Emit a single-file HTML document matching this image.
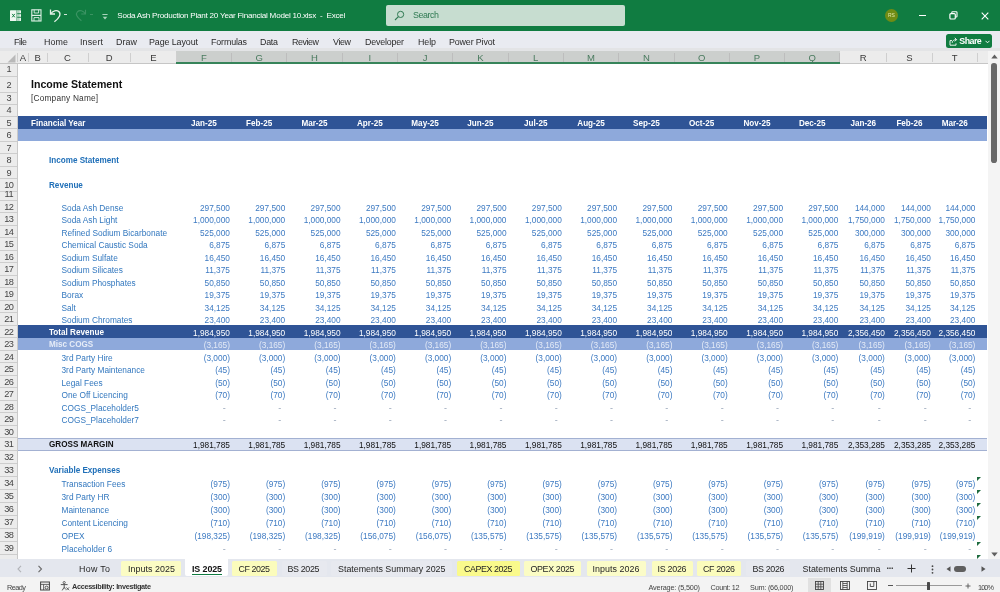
<!DOCTYPE html><html><head><meta charset="utf-8"><title>Soda Ash Production Plant 20 Year Financial Model 10.xlsx - Excel</title><style>
html,body{margin:0;padding:0;}
body{width:1000px;height:592px;overflow:hidden;position:relative;background:#fff;font-family:"Liberation Sans",sans-serif;-webkit-font-smoothing:antialiased;}
.a{position:absolute;white-space:nowrap;line-height:1;}
.t{position:absolute;white-space:nowrap;line-height:1;}
#titlebar{left:0;top:0;width:1000px;height:31px;background:#107c41;}
#ribbon{left:0;top:31px;width:1000px;height:17.3px;background:#e9ebf1;}
#strip{left:0;top:48.3px;width:1000px;height:2.8px;background:#e3e4e6;}
#colhdr{left:0;top:51px;width:1000px;height:12.75px;background:#ececec;}
#rowhdr{left:0;top:63.75px;width:17.5px;height:495.5px;background:#ececec;border-right:1px solid #c9c9c9;box-sizing:border-box;}
#tabbar{left:0;top:559px;width:1000px;height:18px;background:#e4e7ee;}
#status{left:0;top:577px;width:1000px;height:15px;background:#f3f3f3;}
.rn{font-size:9.2px;color:#444;width:17.6px;text-align:center;left:0.3px;letter-spacing:-.5px;text-indent:-.5px;}
.cl{font-size:9.5px;color:#3a3a3a;text-align:center;}
.rib{font-size:8.9px;color:#2b2b2b;}
.lab{font-size:8.3px;color:#3378bf;}
.num{font-size:8.3px;color:#3d7ac2;text-align:right;}
.sec{font-size:8.15px;color:#1f6fb8;font-weight:bold;}
.band{left:17.5px;width:969.4px;}
.tab{font-size:8.9px;color:#262626;}
.tabbg{top:560.5px;height:15.5px;border-radius:1.5px;}
.st{font-size:7.3px;color:#444;}
</style></head><body><div id="root" style="position:absolute;left:0;top:0;width:1000px;height:592px;will-change:transform">
<div class="a" id="titlebar"></div>
<svg class="a" style="left:10px;top:10px" width="11.2" height="11.2" viewBox="0 0 11.2 11.2"><rect x="0" y="0.2" width="11" height="10.8" fill="#eef7f1" rx=".6"/><path d="M6.9 .2v10.8" stroke="#107c41" stroke-width=".7"/><path d="M7.2 3.7h3.8M7.2 7.3h3.8" stroke="#107c41" stroke-width=".9"/><path d="M8.9 .2v10.8" stroke="#107c41" stroke-width=".45"/><path d="M2.2 3.9l2.6 3.4M4.8 3.9L2.2 7.3" stroke="#107c41" stroke-width="1"/></svg>
<svg class="a" style="left:30.9px;top:9.2px" width="11" height="13" viewBox="0 0 11 13"><rect x=".8" y=".8" width="9.2" height="11.2" fill="none" stroke="#dff0e6" stroke-width="1.1"/><path d="M.8 6.4h9.2" stroke="#dff0e6" stroke-width="1.2"/><path d="M3.2 .8v3.2h4.4V.8" fill="none" stroke="#dff0e6" stroke-width=".9"/><path d="M3 12V8.6h5V12" fill="none" stroke="#dff0e6" stroke-width=".9"/></svg>
<svg class="a" style="left:49px;top:7.8px" width="13" height="15" viewBox="0 0 13 15"><path d="M1.5 1.5v4.5h4.5" fill="none" stroke="#e6f2ea" stroke-width="1.3"/><path d="M1.8 5.8C3.5 2.6 7.8 1.6 10 3.8c2.3 2.4 0.4 6-4.6 10" fill="none" stroke="#e6f2ea" stroke-width="1.3"/></svg>
<div class="a" style="left:64.3px;top:13.9px;width:3.2px;height:1.3px;background:#cfe5d8"></div>
<svg class="a" style="left:74px;top:8.2px;opacity:.2" width="13" height="14" viewBox="0 0 13 14"><path d="M11.5 1.8v4.2H7.3" fill="none" stroke="#e6f2ea" stroke-width="1.1"/><path d="M11.2 5.8C9.5 2.6 5.5 1.6 3.4 3.8c-2.2 2.3-.6 5.5 4 9" fill="none" stroke="#e6f2ea" stroke-width="1.1"/></svg>
<div class="a" style="left:90.3px;top:13.9px;width:3.2px;height:1.3px;background:#d5e8dc;opacity:.22"></div>
<svg class="a" style="left:100.5px;top:12.5px" width="8" height="8" viewBox="0 0 8 8"><path d="M1.4 1.5h5.2" stroke="#a9d3bb" stroke-width="1"/><path d="M1.7 3.8h4.6L4 6.4z" fill="#a9d3bb"/></svg>
<div class="t" id="ttl" style="letter-spacing:-0.240px;left:117.3px;top:12.2px;font-size:8.1px;color:#fff;">Soda Ash Production Plant 20 Year Financial Model 10.xlsx&nbsp; -&nbsp; Excel</div>
<div class="a" style="left:385.5px;top:5px;width:239.5px;height:20.5px;background:#c7ddd0;border-radius:2px"></div>
<svg class="a" style="left:393.6px;top:9.8px" width="11" height="11" viewBox="0 0 11 11"><circle cx="6.6" cy="4.4" r="3.1" fill="none" stroke="#2f7a52" stroke-width="1"/><path d="M4.4 6.6L1 10" stroke="#2f7a52" stroke-width="1.1"/></svg>
<div class="t" id="srch" style="letter-spacing:-0.425px;left:413px;top:11px;font-size:8.9px;color:#2f7a52;">Search</div>
<div class="a" style="left:884.7px;top:8.7px;width:13.6px;height:13.6px;border-radius:50%;background:#6f8c14;"></div>
<div class="t" style="left:888px;top:13.2px;font-size:5px;color:#e3e8a8;">RS</div>
<div class="a" style="left:918.5px;top:15px;width:7px;height:1px;background:#fff"></div>
<svg class="a" style="left:948.5px;top:11px" width="9" height="9" viewBox="0 0 9 9"><rect x="0.9" y="2.6" width="5.4" height="5.4" fill="none" stroke="#fff" stroke-width="1.2" rx="1"/><path d="M2.8 2.2V1.6a.8.8 0 0 1 .8-.8h3.6a.8.8 0 0 1 .8.8v3.6a.8.8 0 0 1-.8.8h-.6" fill="none" stroke="#fff" stroke-width="1.1"/></svg>
<svg class="a" style="left:980.5px;top:11.5px" width="8" height="8" viewBox="0 0 8 8"><path d="M.7.7l6.6 6.6M7.3.7L.7 7.3" stroke="#fff" stroke-width="1.1"/></svg>
<div class="a" id="ribbon"></div><div class="a" id="strip"></div>
<div class="t rib" style="letter-spacing:-0.438px;left:14px;top:38.1px;">File</div>
<div class="t rib" style="letter-spacing:0.104px;left:44px;top:38.1px;">Home</div>
<div class="t rib" style="letter-spacing:0.159px;left:80px;top:38.1px;">Insert</div>
<div class="t rib" style="letter-spacing:0.094px;left:116px;top:38.1px;">Draw</div>
<div class="t rib" style="letter-spacing:-0.084px;left:149px;top:38.1px;">Page Layout</div>
<div class="t rib" style="letter-spacing:-0.143px;left:211px;top:38.1px;">Formulas</div>
<div class="t rib" style="letter-spacing:-0.250px;left:260px;top:38.1px;">Data</div>
<div class="t rib" style="letter-spacing:-0.422px;left:292px;top:38.1px;">Review</div>
<div class="t rib" style="letter-spacing:-0.359px;left:333px;top:38.1px;">View</div>
<div class="t rib" style="letter-spacing:-0.184px;left:365px;top:38.1px;">Developer</div>
<div class="t rib" style="letter-spacing:-0.089px;left:418px;top:38.1px;">Help</div>
<div class="t rib" style="letter-spacing:-0.136px;left:449px;top:38.1px;">Power Pivot</div>
<div class="a" style="left:946px;top:33.7px;width:46.3px;height:14.8px;background:#107c41;border-radius:2.5px"></div>
<svg class="a" style="left:949.3px;top:36.7px" width="9" height="9" viewBox="0 0 9 9"><path d="M3 3.6H1v4.6h6V6.4" fill="none" stroke="#fff" stroke-width=".9"/><path d="M3.2 5.8C3.4 3.6 5 2.6 7.4 2.6M5.8 .8l1.8 1.8-1.8 1.8" fill="none" stroke="#fff" stroke-width=".9"/></svg>
<div class="t" style="letter-spacing:-0.543px;left:959.3px;top:36.9px;font-size:8.9px;font-weight:bold;color:#fff;">Share</div>
<svg class="a" style="left:985px;top:40px" width="5" height="4" viewBox="0 0 5 4"><path d="M.5.8l2 2 2-2" fill="none" stroke="#fff" stroke-width=".9"/></svg>
<div class="a" id="colhdr"></div>
<div class="a" style="left:176.25px;top:51px;width:663.75px;height:12.75px;background:#cccfcd;border-bottom:2px solid #37845a;box-sizing:border-box"></div>
<div class="a" style="left:0;top:63.25px;width:176.25px;height:.6px;background:#c6c6c6"></div>
<div class="a" style="left:840px;top:63.25px;width:160px;height:.6px;background:#c6c6c6"></div>
<div class="a cl" style="left:17.5px;width:11.00px;top:53.2px;color:#3a3a3a">A</div>
<div class="a" style="left:28.00px;top:53px;width:.8px;height:9px;background:#cfcfcf"></div>
<div class="a cl" style="left:28.5px;width:18.50px;top:53.2px;color:#3a3a3a">B</div>
<div class="a" style="left:46.50px;top:53px;width:.8px;height:9px;background:#cfcfcf"></div>
<div class="a cl" style="left:47px;width:41.00px;top:53.2px;color:#3a3a3a">C</div>
<div class="a" style="left:87.50px;top:53px;width:.8px;height:9px;background:#cfcfcf"></div>
<div class="a cl" style="left:88px;width:42.50px;top:53.2px;color:#3a3a3a">D</div>
<div class="a" style="left:130.00px;top:53px;width:.8px;height:9px;background:#cfcfcf"></div>
<div class="a cl" style="left:130.5px;width:45.75px;top:53.2px;color:#3a3a3a">E</div>
<div class="a" style="left:175.75px;top:53px;width:.8px;height:9px;background:#cfcfcf"></div>
<div class="a cl" style="left:176.25px;width:55.31px;top:53.2px;color:#4a7b5f">F</div>
<div class="a" style="left:231.06px;top:53px;width:.8px;height:9px;background:#bdbdbd"></div>
<div class="a cl" style="left:231.56px;width:55.31px;top:53.2px;color:#4a7b5f">G</div>
<div class="a" style="left:286.37px;top:53px;width:.8px;height:9px;background:#bdbdbd"></div>
<div class="a cl" style="left:286.87px;width:55.31px;top:53.2px;color:#4a7b5f">H</div>
<div class="a" style="left:341.68px;top:53px;width:.8px;height:9px;background:#bdbdbd"></div>
<div class="a cl" style="left:342.18px;width:55.31px;top:53.2px;color:#4a7b5f">I</div>
<div class="a" style="left:396.99px;top:53px;width:.8px;height:9px;background:#bdbdbd"></div>
<div class="a cl" style="left:397.49px;width:55.31px;top:53.2px;color:#4a7b5f">J</div>
<div class="a" style="left:452.30px;top:53px;width:.8px;height:9px;background:#bdbdbd"></div>
<div class="a cl" style="left:452.8px;width:55.31px;top:53.2px;color:#4a7b5f">K</div>
<div class="a" style="left:507.61px;top:53px;width:.8px;height:9px;background:#bdbdbd"></div>
<div class="a cl" style="left:508.11px;width:55.31px;top:53.2px;color:#4a7b5f">L</div>
<div class="a" style="left:562.92px;top:53px;width:.8px;height:9px;background:#bdbdbd"></div>
<div class="a cl" style="left:563.4200000000001px;width:55.31px;top:53.2px;color:#4a7b5f">M</div>
<div class="a" style="left:618.23px;top:53px;width:.8px;height:9px;background:#bdbdbd"></div>
<div class="a cl" style="left:618.73px;width:55.31px;top:53.2px;color:#4a7b5f">N</div>
<div class="a" style="left:673.54px;top:53px;width:.8px;height:9px;background:#bdbdbd"></div>
<div class="a cl" style="left:674.04px;width:55.31px;top:53.2px;color:#4a7b5f">O</div>
<div class="a" style="left:728.85px;top:53px;width:.8px;height:9px;background:#bdbdbd"></div>
<div class="a cl" style="left:729.3499999999999px;width:55.31px;top:53.2px;color:#4a7b5f">P</div>
<div class="a" style="left:784.16px;top:53px;width:.8px;height:9px;background:#bdbdbd"></div>
<div class="a cl" style="left:784.6599999999999px;width:55.31px;top:53.2px;color:#4a7b5f">Q</div>
<div class="a" style="left:839.47px;top:53px;width:.8px;height:9px;background:#bdbdbd"></div>
<div class="a cl" style="left:840px;width:46.50px;top:53.2px;color:#3a3a3a">R</div>
<div class="a" style="left:886.00px;top:53px;width:.8px;height:9px;background:#cfcfcf"></div>
<div class="a cl" style="left:886.5px;width:46.00px;top:53.2px;color:#3a3a3a">S</div>
<div class="a" style="left:932.00px;top:53px;width:.8px;height:9px;background:#cfcfcf"></div>
<div class="a cl" style="left:932.5px;width:44.50px;top:53.2px;color:#3a3a3a">T</div>
<div class="a" style="left:976.50px;top:53px;width:.8px;height:9px;background:#cfcfcf"></div>
<svg class="a" style="left:7px;top:54px" width="9" height="9" viewBox="0 0 9 9"><path d="M8.5 .5v8h-8z" fill="#b9b9b9"/></svg>
<div class="a" style="left:17px;top:53px;width:.8px;height:9px;background:#cfcfcf"></div>
<div class="a" id="rowhdr"></div>
<div class="a rn" style="top:65.40px;">1</div>
<div class="a" style="left:0;top:75.85px;width:17px;height:.7px;background:#cdcdcd"></div>
<div class="a rn" style="top:80.65px;">2</div>
<div class="a" style="left:0;top:91.85px;width:17px;height:.7px;background:#cdcdcd"></div>
<div class="a rn" style="top:94.05px;">3</div>
<div class="a" style="left:0;top:103.85px;width:17px;height:.7px;background:#cdcdcd"></div>
<div class="a rn" style="top:106.12px;">4</div>
<div class="a" style="left:0;top:115.60px;width:17px;height:.7px;background:#cdcdcd"></div>
<div class="a rn" style="top:118.65px;">5</div>
<div class="a" style="left:0;top:128.10px;width:17px;height:.7px;background:#cdcdcd"></div>
<div class="a rn" style="top:131.15px;">6</div>
<div class="a" style="left:0;top:140.60px;width:17px;height:.7px;background:#cdcdcd"></div>
<div class="a rn" style="top:143.65px;">7</div>
<div class="a" style="left:0;top:153.10px;width:17px;height:.7px;background:#cdcdcd"></div>
<div class="a rn" style="top:156.15px;">8</div>
<div class="a" style="left:0;top:165.60px;width:17px;height:.7px;background:#cdcdcd"></div>
<div class="a rn" style="top:168.65px;">9</div>
<div class="a" style="left:0;top:178.10px;width:17px;height:.7px;background:#cdcdcd"></div>
<div class="a rn" style="top:181.15px;">10</div>
<div class="a" style="left:0;top:190.60px;width:17px;height:.7px;background:#cdcdcd"></div>
<div class="a rn" style="top:190.00px;">11</div>
<div class="a" style="left:0;top:199.60px;width:17px;height:.7px;background:#cdcdcd"></div>
<div class="a rn" style="top:202.65px;">12</div>
<div class="a" style="left:0;top:212.10px;width:17px;height:.7px;background:#cdcdcd"></div>
<div class="a rn" style="top:215.15px;">13</div>
<div class="a" style="left:0;top:224.60px;width:17px;height:.7px;background:#cdcdcd"></div>
<div class="a rn" style="top:227.65px;">14</div>
<div class="a" style="left:0;top:237.10px;width:17px;height:.7px;background:#cdcdcd"></div>
<div class="a rn" style="top:240.15px;">15</div>
<div class="a" style="left:0;top:249.60px;width:17px;height:.7px;background:#cdcdcd"></div>
<div class="a rn" style="top:252.65px;">16</div>
<div class="a" style="left:0;top:262.10px;width:17px;height:.7px;background:#cdcdcd"></div>
<div class="a rn" style="top:265.15px;">17</div>
<div class="a" style="left:0;top:274.60px;width:17px;height:.7px;background:#cdcdcd"></div>
<div class="a rn" style="top:277.65px;">18</div>
<div class="a" style="left:0;top:287.10px;width:17px;height:.7px;background:#cdcdcd"></div>
<div class="a rn" style="top:290.15px;">19</div>
<div class="a" style="left:0;top:299.60px;width:17px;height:.7px;background:#cdcdcd"></div>
<div class="a rn" style="top:302.65px;">20</div>
<div class="a" style="left:0;top:312.10px;width:17px;height:.7px;background:#cdcdcd"></div>
<div class="a rn" style="top:315.15px;">21</div>
<div class="a" style="left:0;top:324.60px;width:17px;height:.7px;background:#cdcdcd"></div>
<div class="a rn" style="top:327.65px;">22</div>
<div class="a" style="left:0;top:337.10px;width:17px;height:.7px;background:#cdcdcd"></div>
<div class="a rn" style="top:340.15px;">23</div>
<div class="a" style="left:0;top:349.60px;width:17px;height:.7px;background:#cdcdcd"></div>
<div class="a rn" style="top:352.65px;">24</div>
<div class="a" style="left:0;top:362.10px;width:17px;height:.7px;background:#cdcdcd"></div>
<div class="a rn" style="top:365.15px;">25</div>
<div class="a" style="left:0;top:374.60px;width:17px;height:.7px;background:#cdcdcd"></div>
<div class="a rn" style="top:377.65px;">26</div>
<div class="a" style="left:0;top:387.10px;width:17px;height:.7px;background:#cdcdcd"></div>
<div class="a rn" style="top:390.15px;">27</div>
<div class="a" style="left:0;top:399.60px;width:17px;height:.7px;background:#cdcdcd"></div>
<div class="a rn" style="top:402.65px;">28</div>
<div class="a" style="left:0;top:412.10px;width:17px;height:.7px;background:#cdcdcd"></div>
<div class="a rn" style="top:415.15px;">29</div>
<div class="a" style="left:0;top:424.60px;width:17px;height:.7px;background:#cdcdcd"></div>
<div class="a rn" style="top:427.65px;">30</div>
<div class="a" style="left:0;top:437.10px;width:17px;height:.7px;background:#cdcdcd"></div>
<div class="a rn" style="top:440.40px;">31</div>
<div class="a" style="left:0;top:450.10px;width:17px;height:.7px;background:#cdcdcd"></div>
<div class="a rn" style="top:453.40px;">32</div>
<div class="a" style="left:0;top:463.10px;width:17px;height:.7px;background:#cdcdcd"></div>
<div class="a rn" style="top:466.40px;">33</div>
<div class="a" style="left:0;top:476.10px;width:17px;height:.7px;background:#cdcdcd"></div>
<div class="a rn" style="top:479.40px;">34</div>
<div class="a" style="left:0;top:489.10px;width:17px;height:.7px;background:#cdcdcd"></div>
<div class="a rn" style="top:492.40px;">35</div>
<div class="a" style="left:0;top:502.10px;width:17px;height:.7px;background:#cdcdcd"></div>
<div class="a rn" style="top:505.40px;">36</div>
<div class="a" style="left:0;top:515.10px;width:17px;height:.7px;background:#cdcdcd"></div>
<div class="a rn" style="top:518.40px;">37</div>
<div class="a" style="left:0;top:528.10px;width:17px;height:.7px;background:#cdcdcd"></div>
<div class="a rn" style="top:531.40px;">38</div>
<div class="a" style="left:0;top:541.10px;width:17px;height:.7px;background:#cdcdcd"></div>
<div class="a rn" style="top:544.40px;">39</div>
<div class="a" style="left:0;top:554.10px;width:17px;height:.7px;background:#cdcdcd"></div>
<div class="a band" style="top:116px;height:12.5px;background:#2f5496;"></div>
<div class="a band" style="top:128.5px;height:12.5px;background:#8ea9db;"></div>
<div class="a band" style="top:325.0px;height:12.5px;background:#2f5496;"></div>
<div class="a band" style="top:337.5px;height:12.5px;background:#8ea9db;"></div>
<div class="a band" style="top:437.5px;height:13.0px;background:#dbe2f2;border-top:.8px solid #a3b1d2;border-bottom:.8px solid #a3b1d2;box-sizing:border-box;"></div>
<div class="t" id="h1" style="left:31px;top:78.85px;font-size:10.6px;font-weight:bold;color:#111;">Income Statement</div>
<div class="t lab" style="left:31px;top:95.60px;color:#333;margin-top:-1.2px;letter-spacing:.2px;">[Company Name]</div>
<div class="t sec" style="left:31px;top:119.60px;color:#fff;">Financial Year</div>
<div class="t sec" style="left:176.25px;width:55.31px;text-align:center;top:119.60px;color:#fff;">Jan-25</div>
<div class="t sec" style="left:231.56px;width:55.31px;text-align:center;top:119.60px;color:#fff;">Feb-25</div>
<div class="t sec" style="left:286.87px;width:55.31px;text-align:center;top:119.60px;color:#fff;">Mar-25</div>
<div class="t sec" style="left:342.18px;width:55.31px;text-align:center;top:119.60px;color:#fff;">Apr-25</div>
<div class="t sec" style="left:397.49px;width:55.31px;text-align:center;top:119.60px;color:#fff;">May-25</div>
<div class="t sec" style="left:452.8px;width:55.31px;text-align:center;top:119.60px;color:#fff;">Jun-25</div>
<div class="t sec" style="left:508.11px;width:55.31px;text-align:center;top:119.60px;color:#fff;">Jul-25</div>
<div class="t sec" style="left:563.4200000000001px;width:55.31px;text-align:center;top:119.60px;color:#fff;">Aug-25</div>
<div class="t sec" style="left:618.73px;width:55.31px;text-align:center;top:119.60px;color:#fff;">Sep-25</div>
<div class="t sec" style="left:674.04px;width:55.31px;text-align:center;top:119.60px;color:#fff;">Oct-25</div>
<div class="t sec" style="left:729.3499999999999px;width:55.31px;text-align:center;top:119.60px;color:#fff;">Nov-25</div>
<div class="t sec" style="left:784.6599999999999px;width:55.31px;text-align:center;top:119.60px;color:#fff;">Dec-25</div>
<div class="t sec" style="left:840px;width:46.50px;text-align:center;top:119.60px;color:#fff;">Jan-26</div>
<div class="t sec" style="left:886.5px;width:46.00px;text-align:center;top:119.60px;color:#fff;">Feb-26</div>
<div class="t sec" style="left:932.5px;width:44.50px;text-align:center;top:119.60px;color:#fff;">Mar-26</div>
<div class="t sec" style="left:49px;top:157.10px;">Income Statement</div>
<div class="t sec" style="left:49px;top:182.10px;">Revenue</div>
<div class="t lab" style="left:61.5px;top:203.60px;">Soda Ash Dense</div>
<div class="t num" style="left:176.25px;width:53.71px;top:203.60px;">297,500</div>
<div class="t num" style="left:231.56px;width:53.71px;top:203.60px;">297,500</div>
<div class="t num" style="left:286.87px;width:53.71px;top:203.60px;">297,500</div>
<div class="t num" style="left:342.18px;width:53.71px;top:203.60px;">297,500</div>
<div class="t num" style="left:397.49px;width:53.71px;top:203.60px;">297,500</div>
<div class="t num" style="left:452.8px;width:53.71px;top:203.60px;">297,500</div>
<div class="t num" style="left:508.11px;width:53.71px;top:203.60px;">297,500</div>
<div class="t num" style="left:563.4200000000001px;width:53.71px;top:203.60px;">297,500</div>
<div class="t num" style="left:618.73px;width:53.71px;top:203.60px;">297,500</div>
<div class="t num" style="left:674.04px;width:53.71px;top:203.60px;">297,500</div>
<div class="t num" style="left:729.3499999999999px;width:53.71px;top:203.60px;">297,500</div>
<div class="t num" style="left:784.6599999999999px;width:53.71px;top:203.60px;">297,500</div>
<div class="t num" style="left:840px;width:44.90px;top:203.60px;">144,000</div>
<div class="t num" style="left:886.5px;width:44.40px;top:203.60px;">144,000</div>
<div class="t num" style="left:932.5px;width:42.90px;top:203.60px;">144,000</div>
<div class="t lab" style="left:61.5px;top:216.10px;">Soda Ash Light</div>
<div class="t num" style="left:176.25px;width:53.71px;top:216.10px;">1,000,000</div>
<div class="t num" style="left:231.56px;width:53.71px;top:216.10px;">1,000,000</div>
<div class="t num" style="left:286.87px;width:53.71px;top:216.10px;">1,000,000</div>
<div class="t num" style="left:342.18px;width:53.71px;top:216.10px;">1,000,000</div>
<div class="t num" style="left:397.49px;width:53.71px;top:216.10px;">1,000,000</div>
<div class="t num" style="left:452.8px;width:53.71px;top:216.10px;">1,000,000</div>
<div class="t num" style="left:508.11px;width:53.71px;top:216.10px;">1,000,000</div>
<div class="t num" style="left:563.4200000000001px;width:53.71px;top:216.10px;">1,000,000</div>
<div class="t num" style="left:618.73px;width:53.71px;top:216.10px;">1,000,000</div>
<div class="t num" style="left:674.04px;width:53.71px;top:216.10px;">1,000,000</div>
<div class="t num" style="left:729.3499999999999px;width:53.71px;top:216.10px;">1,000,000</div>
<div class="t num" style="left:784.6599999999999px;width:53.71px;top:216.10px;">1,000,000</div>
<div class="t num" style="left:840px;width:44.90px;top:216.10px;">1,750,000</div>
<div class="t num" style="left:886.5px;width:44.40px;top:216.10px;">1,750,000</div>
<div class="t num" style="left:932.5px;width:42.90px;top:216.10px;">1,750,000</div>
<div class="t lab" style="left:61.5px;top:228.60px;">Refined Sodium Bicarbonate</div>
<div class="t num" style="left:176.25px;width:53.71px;top:228.60px;">525,000</div>
<div class="t num" style="left:231.56px;width:53.71px;top:228.60px;">525,000</div>
<div class="t num" style="left:286.87px;width:53.71px;top:228.60px;">525,000</div>
<div class="t num" style="left:342.18px;width:53.71px;top:228.60px;">525,000</div>
<div class="t num" style="left:397.49px;width:53.71px;top:228.60px;">525,000</div>
<div class="t num" style="left:452.8px;width:53.71px;top:228.60px;">525,000</div>
<div class="t num" style="left:508.11px;width:53.71px;top:228.60px;">525,000</div>
<div class="t num" style="left:563.4200000000001px;width:53.71px;top:228.60px;">525,000</div>
<div class="t num" style="left:618.73px;width:53.71px;top:228.60px;">525,000</div>
<div class="t num" style="left:674.04px;width:53.71px;top:228.60px;">525,000</div>
<div class="t num" style="left:729.3499999999999px;width:53.71px;top:228.60px;">525,000</div>
<div class="t num" style="left:784.6599999999999px;width:53.71px;top:228.60px;">525,000</div>
<div class="t num" style="left:840px;width:44.90px;top:228.60px;">300,000</div>
<div class="t num" style="left:886.5px;width:44.40px;top:228.60px;">300,000</div>
<div class="t num" style="left:932.5px;width:42.90px;top:228.60px;">300,000</div>
<div class="t lab" style="left:61.5px;top:241.10px;">Chemical Caustic Soda</div>
<div class="t num" style="left:176.25px;width:53.71px;top:241.10px;">6,875</div>
<div class="t num" style="left:231.56px;width:53.71px;top:241.10px;">6,875</div>
<div class="t num" style="left:286.87px;width:53.71px;top:241.10px;">6,875</div>
<div class="t num" style="left:342.18px;width:53.71px;top:241.10px;">6,875</div>
<div class="t num" style="left:397.49px;width:53.71px;top:241.10px;">6,875</div>
<div class="t num" style="left:452.8px;width:53.71px;top:241.10px;">6,875</div>
<div class="t num" style="left:508.11px;width:53.71px;top:241.10px;">6,875</div>
<div class="t num" style="left:563.4200000000001px;width:53.71px;top:241.10px;">6,875</div>
<div class="t num" style="left:618.73px;width:53.71px;top:241.10px;">6,875</div>
<div class="t num" style="left:674.04px;width:53.71px;top:241.10px;">6,875</div>
<div class="t num" style="left:729.3499999999999px;width:53.71px;top:241.10px;">6,875</div>
<div class="t num" style="left:784.6599999999999px;width:53.71px;top:241.10px;">6,875</div>
<div class="t num" style="left:840px;width:44.90px;top:241.10px;">6,875</div>
<div class="t num" style="left:886.5px;width:44.40px;top:241.10px;">6,875</div>
<div class="t num" style="left:932.5px;width:42.90px;top:241.10px;">6,875</div>
<div class="t lab" style="left:61.5px;top:253.60px;">Sodium Sulfate</div>
<div class="t num" style="left:176.25px;width:53.71px;top:253.60px;">16,450</div>
<div class="t num" style="left:231.56px;width:53.71px;top:253.60px;">16,450</div>
<div class="t num" style="left:286.87px;width:53.71px;top:253.60px;">16,450</div>
<div class="t num" style="left:342.18px;width:53.71px;top:253.60px;">16,450</div>
<div class="t num" style="left:397.49px;width:53.71px;top:253.60px;">16,450</div>
<div class="t num" style="left:452.8px;width:53.71px;top:253.60px;">16,450</div>
<div class="t num" style="left:508.11px;width:53.71px;top:253.60px;">16,450</div>
<div class="t num" style="left:563.4200000000001px;width:53.71px;top:253.60px;">16,450</div>
<div class="t num" style="left:618.73px;width:53.71px;top:253.60px;">16,450</div>
<div class="t num" style="left:674.04px;width:53.71px;top:253.60px;">16,450</div>
<div class="t num" style="left:729.3499999999999px;width:53.71px;top:253.60px;">16,450</div>
<div class="t num" style="left:784.6599999999999px;width:53.71px;top:253.60px;">16,450</div>
<div class="t num" style="left:840px;width:44.90px;top:253.60px;">16,450</div>
<div class="t num" style="left:886.5px;width:44.40px;top:253.60px;">16,450</div>
<div class="t num" style="left:932.5px;width:42.90px;top:253.60px;">16,450</div>
<div class="t lab" style="left:61.5px;top:266.10px;">Sodium Silicates</div>
<div class="t num" style="left:176.25px;width:53.71px;top:266.10px;">11,375</div>
<div class="t num" style="left:231.56px;width:53.71px;top:266.10px;">11,375</div>
<div class="t num" style="left:286.87px;width:53.71px;top:266.10px;">11,375</div>
<div class="t num" style="left:342.18px;width:53.71px;top:266.10px;">11,375</div>
<div class="t num" style="left:397.49px;width:53.71px;top:266.10px;">11,375</div>
<div class="t num" style="left:452.8px;width:53.71px;top:266.10px;">11,375</div>
<div class="t num" style="left:508.11px;width:53.71px;top:266.10px;">11,375</div>
<div class="t num" style="left:563.4200000000001px;width:53.71px;top:266.10px;">11,375</div>
<div class="t num" style="left:618.73px;width:53.71px;top:266.10px;">11,375</div>
<div class="t num" style="left:674.04px;width:53.71px;top:266.10px;">11,375</div>
<div class="t num" style="left:729.3499999999999px;width:53.71px;top:266.10px;">11,375</div>
<div class="t num" style="left:784.6599999999999px;width:53.71px;top:266.10px;">11,375</div>
<div class="t num" style="left:840px;width:44.90px;top:266.10px;">11,375</div>
<div class="t num" style="left:886.5px;width:44.40px;top:266.10px;">11,375</div>
<div class="t num" style="left:932.5px;width:42.90px;top:266.10px;">11,375</div>
<div class="t lab" style="left:61.5px;top:278.60px;">Sodium Phosphates</div>
<div class="t num" style="left:176.25px;width:53.71px;top:278.60px;">50,850</div>
<div class="t num" style="left:231.56px;width:53.71px;top:278.60px;">50,850</div>
<div class="t num" style="left:286.87px;width:53.71px;top:278.60px;">50,850</div>
<div class="t num" style="left:342.18px;width:53.71px;top:278.60px;">50,850</div>
<div class="t num" style="left:397.49px;width:53.71px;top:278.60px;">50,850</div>
<div class="t num" style="left:452.8px;width:53.71px;top:278.60px;">50,850</div>
<div class="t num" style="left:508.11px;width:53.71px;top:278.60px;">50,850</div>
<div class="t num" style="left:563.4200000000001px;width:53.71px;top:278.60px;">50,850</div>
<div class="t num" style="left:618.73px;width:53.71px;top:278.60px;">50,850</div>
<div class="t num" style="left:674.04px;width:53.71px;top:278.60px;">50,850</div>
<div class="t num" style="left:729.3499999999999px;width:53.71px;top:278.60px;">50,850</div>
<div class="t num" style="left:784.6599999999999px;width:53.71px;top:278.60px;">50,850</div>
<div class="t num" style="left:840px;width:44.90px;top:278.60px;">50,850</div>
<div class="t num" style="left:886.5px;width:44.40px;top:278.60px;">50,850</div>
<div class="t num" style="left:932.5px;width:42.90px;top:278.60px;">50,850</div>
<div class="t lab" style="left:61.5px;top:291.10px;">Borax</div>
<div class="t num" style="left:176.25px;width:53.71px;top:291.10px;">19,375</div>
<div class="t num" style="left:231.56px;width:53.71px;top:291.10px;">19,375</div>
<div class="t num" style="left:286.87px;width:53.71px;top:291.10px;">19,375</div>
<div class="t num" style="left:342.18px;width:53.71px;top:291.10px;">19,375</div>
<div class="t num" style="left:397.49px;width:53.71px;top:291.10px;">19,375</div>
<div class="t num" style="left:452.8px;width:53.71px;top:291.10px;">19,375</div>
<div class="t num" style="left:508.11px;width:53.71px;top:291.10px;">19,375</div>
<div class="t num" style="left:563.4200000000001px;width:53.71px;top:291.10px;">19,375</div>
<div class="t num" style="left:618.73px;width:53.71px;top:291.10px;">19,375</div>
<div class="t num" style="left:674.04px;width:53.71px;top:291.10px;">19,375</div>
<div class="t num" style="left:729.3499999999999px;width:53.71px;top:291.10px;">19,375</div>
<div class="t num" style="left:784.6599999999999px;width:53.71px;top:291.10px;">19,375</div>
<div class="t num" style="left:840px;width:44.90px;top:291.10px;">19,375</div>
<div class="t num" style="left:886.5px;width:44.40px;top:291.10px;">19,375</div>
<div class="t num" style="left:932.5px;width:42.90px;top:291.10px;">19,375</div>
<div class="t lab" style="left:61.5px;top:303.60px;">Salt</div>
<div class="t num" style="left:176.25px;width:53.71px;top:303.60px;">34,125</div>
<div class="t num" style="left:231.56px;width:53.71px;top:303.60px;">34,125</div>
<div class="t num" style="left:286.87px;width:53.71px;top:303.60px;">34,125</div>
<div class="t num" style="left:342.18px;width:53.71px;top:303.60px;">34,125</div>
<div class="t num" style="left:397.49px;width:53.71px;top:303.60px;">34,125</div>
<div class="t num" style="left:452.8px;width:53.71px;top:303.60px;">34,125</div>
<div class="t num" style="left:508.11px;width:53.71px;top:303.60px;">34,125</div>
<div class="t num" style="left:563.4200000000001px;width:53.71px;top:303.60px;">34,125</div>
<div class="t num" style="left:618.73px;width:53.71px;top:303.60px;">34,125</div>
<div class="t num" style="left:674.04px;width:53.71px;top:303.60px;">34,125</div>
<div class="t num" style="left:729.3499999999999px;width:53.71px;top:303.60px;">34,125</div>
<div class="t num" style="left:784.6599999999999px;width:53.71px;top:303.60px;">34,125</div>
<div class="t num" style="left:840px;width:44.90px;top:303.60px;">34,125</div>
<div class="t num" style="left:886.5px;width:44.40px;top:303.60px;">34,125</div>
<div class="t num" style="left:932.5px;width:42.90px;top:303.60px;">34,125</div>
<div class="t lab" style="left:61.5px;top:316.10px;">Sodium Chromates</div>
<div class="t num" style="left:176.25px;width:53.71px;top:316.10px;">23,400</div>
<div class="t num" style="left:231.56px;width:53.71px;top:316.10px;">23,400</div>
<div class="t num" style="left:286.87px;width:53.71px;top:316.10px;">23,400</div>
<div class="t num" style="left:342.18px;width:53.71px;top:316.10px;">23,400</div>
<div class="t num" style="left:397.49px;width:53.71px;top:316.10px;">23,400</div>
<div class="t num" style="left:452.8px;width:53.71px;top:316.10px;">23,400</div>
<div class="t num" style="left:508.11px;width:53.71px;top:316.10px;">23,400</div>
<div class="t num" style="left:563.4200000000001px;width:53.71px;top:316.10px;">23,400</div>
<div class="t num" style="left:618.73px;width:53.71px;top:316.10px;">23,400</div>
<div class="t num" style="left:674.04px;width:53.71px;top:316.10px;">23,400</div>
<div class="t num" style="left:729.3499999999999px;width:53.71px;top:316.10px;">23,400</div>
<div class="t num" style="left:784.6599999999999px;width:53.71px;top:316.10px;">23,400</div>
<div class="t num" style="left:840px;width:44.90px;top:316.10px;">23,400</div>
<div class="t num" style="left:886.5px;width:44.40px;top:316.10px;">23,400</div>
<div class="t num" style="left:932.5px;width:42.90px;top:316.10px;">23,400</div>
<div class="t lab" style="left:61.5px;top:353.60px;">3rd Party Hire</div>
<div class="t num" style="left:176.25px;width:53.71px;top:353.60px;">(3,000)</div>
<div class="t num" style="left:231.56px;width:53.71px;top:353.60px;">(3,000)</div>
<div class="t num" style="left:286.87px;width:53.71px;top:353.60px;">(3,000)</div>
<div class="t num" style="left:342.18px;width:53.71px;top:353.60px;">(3,000)</div>
<div class="t num" style="left:397.49px;width:53.71px;top:353.60px;">(3,000)</div>
<div class="t num" style="left:452.8px;width:53.71px;top:353.60px;">(3,000)</div>
<div class="t num" style="left:508.11px;width:53.71px;top:353.60px;">(3,000)</div>
<div class="t num" style="left:563.4200000000001px;width:53.71px;top:353.60px;">(3,000)</div>
<div class="t num" style="left:618.73px;width:53.71px;top:353.60px;">(3,000)</div>
<div class="t num" style="left:674.04px;width:53.71px;top:353.60px;">(3,000)</div>
<div class="t num" style="left:729.3499999999999px;width:53.71px;top:353.60px;">(3,000)</div>
<div class="t num" style="left:784.6599999999999px;width:53.71px;top:353.60px;">(3,000)</div>
<div class="t num" style="left:840px;width:44.90px;top:353.60px;">(3,000)</div>
<div class="t num" style="left:886.5px;width:44.40px;top:353.60px;">(3,000)</div>
<div class="t num" style="left:932.5px;width:42.90px;top:353.60px;">(3,000)</div>
<div class="t lab" style="left:61.5px;top:366.10px;">3rd Party Maintenance</div>
<div class="t num" style="left:176.25px;width:53.71px;top:366.10px;">(45)</div>
<div class="t num" style="left:231.56px;width:53.71px;top:366.10px;">(45)</div>
<div class="t num" style="left:286.87px;width:53.71px;top:366.10px;">(45)</div>
<div class="t num" style="left:342.18px;width:53.71px;top:366.10px;">(45)</div>
<div class="t num" style="left:397.49px;width:53.71px;top:366.10px;">(45)</div>
<div class="t num" style="left:452.8px;width:53.71px;top:366.10px;">(45)</div>
<div class="t num" style="left:508.11px;width:53.71px;top:366.10px;">(45)</div>
<div class="t num" style="left:563.4200000000001px;width:53.71px;top:366.10px;">(45)</div>
<div class="t num" style="left:618.73px;width:53.71px;top:366.10px;">(45)</div>
<div class="t num" style="left:674.04px;width:53.71px;top:366.10px;">(45)</div>
<div class="t num" style="left:729.3499999999999px;width:53.71px;top:366.10px;">(45)</div>
<div class="t num" style="left:784.6599999999999px;width:53.71px;top:366.10px;">(45)</div>
<div class="t num" style="left:840px;width:44.90px;top:366.10px;">(45)</div>
<div class="t num" style="left:886.5px;width:44.40px;top:366.10px;">(45)</div>
<div class="t num" style="left:932.5px;width:42.90px;top:366.10px;">(45)</div>
<div class="t lab" style="left:61.5px;top:378.60px;">Legal Fees</div>
<div class="t num" style="left:176.25px;width:53.71px;top:378.60px;">(50)</div>
<div class="t num" style="left:231.56px;width:53.71px;top:378.60px;">(50)</div>
<div class="t num" style="left:286.87px;width:53.71px;top:378.60px;">(50)</div>
<div class="t num" style="left:342.18px;width:53.71px;top:378.60px;">(50)</div>
<div class="t num" style="left:397.49px;width:53.71px;top:378.60px;">(50)</div>
<div class="t num" style="left:452.8px;width:53.71px;top:378.60px;">(50)</div>
<div class="t num" style="left:508.11px;width:53.71px;top:378.60px;">(50)</div>
<div class="t num" style="left:563.4200000000001px;width:53.71px;top:378.60px;">(50)</div>
<div class="t num" style="left:618.73px;width:53.71px;top:378.60px;">(50)</div>
<div class="t num" style="left:674.04px;width:53.71px;top:378.60px;">(50)</div>
<div class="t num" style="left:729.3499999999999px;width:53.71px;top:378.60px;">(50)</div>
<div class="t num" style="left:784.6599999999999px;width:53.71px;top:378.60px;">(50)</div>
<div class="t num" style="left:840px;width:44.90px;top:378.60px;">(50)</div>
<div class="t num" style="left:886.5px;width:44.40px;top:378.60px;">(50)</div>
<div class="t num" style="left:932.5px;width:42.90px;top:378.60px;">(50)</div>
<div class="t lab" style="left:61.5px;top:391.10px;">One Off Licencing</div>
<div class="t num" style="left:176.25px;width:53.71px;top:391.10px;">(70)</div>
<div class="t num" style="left:231.56px;width:53.71px;top:391.10px;">(70)</div>
<div class="t num" style="left:286.87px;width:53.71px;top:391.10px;">(70)</div>
<div class="t num" style="left:342.18px;width:53.71px;top:391.10px;">(70)</div>
<div class="t num" style="left:397.49px;width:53.71px;top:391.10px;">(70)</div>
<div class="t num" style="left:452.8px;width:53.71px;top:391.10px;">(70)</div>
<div class="t num" style="left:508.11px;width:53.71px;top:391.10px;">(70)</div>
<div class="t num" style="left:563.4200000000001px;width:53.71px;top:391.10px;">(70)</div>
<div class="t num" style="left:618.73px;width:53.71px;top:391.10px;">(70)</div>
<div class="t num" style="left:674.04px;width:53.71px;top:391.10px;">(70)</div>
<div class="t num" style="left:729.3499999999999px;width:53.71px;top:391.10px;">(70)</div>
<div class="t num" style="left:784.6599999999999px;width:53.71px;top:391.10px;">(70)</div>
<div class="t num" style="left:840px;width:44.90px;top:391.10px;">(70)</div>
<div class="t num" style="left:886.5px;width:44.40px;top:391.10px;">(70)</div>
<div class="t num" style="left:932.5px;width:42.90px;top:391.10px;">(70)</div>
<div class="t lab" style="left:61.5px;top:403.60px;">COGS_Placeholder5</div>
<div class="t num" style="left:222.86px;top:403.65px;color:#95a3b6;font-size:9px;">-</div>
<div class="t num" style="left:278.17px;top:403.65px;color:#95a3b6;font-size:9px;">-</div>
<div class="t num" style="left:333.48px;top:403.65px;color:#95a3b6;font-size:9px;">-</div>
<div class="t num" style="left:388.79px;top:403.65px;color:#95a3b6;font-size:9px;">-</div>
<div class="t num" style="left:444.10px;top:403.65px;color:#95a3b6;font-size:9px;">-</div>
<div class="t num" style="left:499.41px;top:403.65px;color:#95a3b6;font-size:9px;">-</div>
<div class="t num" style="left:554.72px;top:403.65px;color:#95a3b6;font-size:9px;">-</div>
<div class="t num" style="left:610.03px;top:403.65px;color:#95a3b6;font-size:9px;">-</div>
<div class="t num" style="left:665.34px;top:403.65px;color:#95a3b6;font-size:9px;">-</div>
<div class="t num" style="left:720.65px;top:403.65px;color:#95a3b6;font-size:9px;">-</div>
<div class="t num" style="left:775.96px;top:403.65px;color:#95a3b6;font-size:9px;">-</div>
<div class="t num" style="left:831.27px;top:403.65px;color:#95a3b6;font-size:9px;">-</div>
<div class="t num" style="left:877.80px;top:403.65px;color:#95a3b6;font-size:9px;">-</div>
<div class="t num" style="left:923.80px;top:403.65px;color:#95a3b6;font-size:9px;">-</div>
<div class="t num" style="left:968.30px;top:403.65px;color:#95a3b6;font-size:9px;">-</div>
<div class="t lab" style="left:61.5px;top:416.10px;">COGS_Placeholder7</div>
<div class="t num" style="left:222.86px;top:416.15px;color:#95a3b6;font-size:9px;">-</div>
<div class="t num" style="left:278.17px;top:416.15px;color:#95a3b6;font-size:9px;">-</div>
<div class="t num" style="left:333.48px;top:416.15px;color:#95a3b6;font-size:9px;">-</div>
<div class="t num" style="left:388.79px;top:416.15px;color:#95a3b6;font-size:9px;">-</div>
<div class="t num" style="left:444.10px;top:416.15px;color:#95a3b6;font-size:9px;">-</div>
<div class="t num" style="left:499.41px;top:416.15px;color:#95a3b6;font-size:9px;">-</div>
<div class="t num" style="left:554.72px;top:416.15px;color:#95a3b6;font-size:9px;">-</div>
<div class="t num" style="left:610.03px;top:416.15px;color:#95a3b6;font-size:9px;">-</div>
<div class="t num" style="left:665.34px;top:416.15px;color:#95a3b6;font-size:9px;">-</div>
<div class="t num" style="left:720.65px;top:416.15px;color:#95a3b6;font-size:9px;">-</div>
<div class="t num" style="left:775.96px;top:416.15px;color:#95a3b6;font-size:9px;">-</div>
<div class="t num" style="left:831.27px;top:416.15px;color:#95a3b6;font-size:9px;">-</div>
<div class="t num" style="left:877.80px;top:416.15px;color:#95a3b6;font-size:9px;">-</div>
<div class="t num" style="left:923.80px;top:416.15px;color:#95a3b6;font-size:9px;">-</div>
<div class="t num" style="left:968.30px;top:416.15px;color:#95a3b6;font-size:9px;">-</div>
<div class="t lab" style="left:61.5px;top:480.35px;">Transaction Fees</div>
<div class="t num" style="left:176.25px;width:53.71px;top:480.35px;">(975)</div>
<div class="t num" style="left:231.56px;width:53.71px;top:480.35px;">(975)</div>
<div class="t num" style="left:286.87px;width:53.71px;top:480.35px;">(975)</div>
<div class="t num" style="left:342.18px;width:53.71px;top:480.35px;">(975)</div>
<div class="t num" style="left:397.49px;width:53.71px;top:480.35px;">(975)</div>
<div class="t num" style="left:452.8px;width:53.71px;top:480.35px;">(975)</div>
<div class="t num" style="left:508.11px;width:53.71px;top:480.35px;">(975)</div>
<div class="t num" style="left:563.4200000000001px;width:53.71px;top:480.35px;">(975)</div>
<div class="t num" style="left:618.73px;width:53.71px;top:480.35px;">(975)</div>
<div class="t num" style="left:674.04px;width:53.71px;top:480.35px;">(975)</div>
<div class="t num" style="left:729.3499999999999px;width:53.71px;top:480.35px;">(975)</div>
<div class="t num" style="left:784.6599999999999px;width:53.71px;top:480.35px;">(975)</div>
<div class="t num" style="left:840px;width:44.90px;top:480.35px;">(975)</div>
<div class="t num" style="left:886.5px;width:44.40px;top:480.35px;">(975)</div>
<div class="t num" style="left:932.5px;width:42.90px;top:480.35px;">(975)</div>
<div class="t lab" style="left:61.5px;top:493.35px;">3rd Party HR</div>
<div class="t num" style="left:176.25px;width:53.71px;top:493.35px;">(300)</div>
<div class="t num" style="left:231.56px;width:53.71px;top:493.35px;">(300)</div>
<div class="t num" style="left:286.87px;width:53.71px;top:493.35px;">(300)</div>
<div class="t num" style="left:342.18px;width:53.71px;top:493.35px;">(300)</div>
<div class="t num" style="left:397.49px;width:53.71px;top:493.35px;">(300)</div>
<div class="t num" style="left:452.8px;width:53.71px;top:493.35px;">(300)</div>
<div class="t num" style="left:508.11px;width:53.71px;top:493.35px;">(300)</div>
<div class="t num" style="left:563.4200000000001px;width:53.71px;top:493.35px;">(300)</div>
<div class="t num" style="left:618.73px;width:53.71px;top:493.35px;">(300)</div>
<div class="t num" style="left:674.04px;width:53.71px;top:493.35px;">(300)</div>
<div class="t num" style="left:729.3499999999999px;width:53.71px;top:493.35px;">(300)</div>
<div class="t num" style="left:784.6599999999999px;width:53.71px;top:493.35px;">(300)</div>
<div class="t num" style="left:840px;width:44.90px;top:493.35px;">(300)</div>
<div class="t num" style="left:886.5px;width:44.40px;top:493.35px;">(300)</div>
<div class="t num" style="left:932.5px;width:42.90px;top:493.35px;">(300)</div>
<div class="t lab" style="left:61.5px;top:506.35px;">Maintenance</div>
<div class="t num" style="left:176.25px;width:53.71px;top:506.35px;">(300)</div>
<div class="t num" style="left:231.56px;width:53.71px;top:506.35px;">(300)</div>
<div class="t num" style="left:286.87px;width:53.71px;top:506.35px;">(300)</div>
<div class="t num" style="left:342.18px;width:53.71px;top:506.35px;">(300)</div>
<div class="t num" style="left:397.49px;width:53.71px;top:506.35px;">(300)</div>
<div class="t num" style="left:452.8px;width:53.71px;top:506.35px;">(300)</div>
<div class="t num" style="left:508.11px;width:53.71px;top:506.35px;">(300)</div>
<div class="t num" style="left:563.4200000000001px;width:53.71px;top:506.35px;">(300)</div>
<div class="t num" style="left:618.73px;width:53.71px;top:506.35px;">(300)</div>
<div class="t num" style="left:674.04px;width:53.71px;top:506.35px;">(300)</div>
<div class="t num" style="left:729.3499999999999px;width:53.71px;top:506.35px;">(300)</div>
<div class="t num" style="left:784.6599999999999px;width:53.71px;top:506.35px;">(300)</div>
<div class="t num" style="left:840px;width:44.90px;top:506.35px;">(300)</div>
<div class="t num" style="left:886.5px;width:44.40px;top:506.35px;">(300)</div>
<div class="t num" style="left:932.5px;width:42.90px;top:506.35px;">(300)</div>
<div class="t lab" style="left:61.5px;top:519.35px;">Content Licencing</div>
<div class="t num" style="left:176.25px;width:53.71px;top:519.35px;">(710)</div>
<div class="t num" style="left:231.56px;width:53.71px;top:519.35px;">(710)</div>
<div class="t num" style="left:286.87px;width:53.71px;top:519.35px;">(710)</div>
<div class="t num" style="left:342.18px;width:53.71px;top:519.35px;">(710)</div>
<div class="t num" style="left:397.49px;width:53.71px;top:519.35px;">(710)</div>
<div class="t num" style="left:452.8px;width:53.71px;top:519.35px;">(710)</div>
<div class="t num" style="left:508.11px;width:53.71px;top:519.35px;">(710)</div>
<div class="t num" style="left:563.4200000000001px;width:53.71px;top:519.35px;">(710)</div>
<div class="t num" style="left:618.73px;width:53.71px;top:519.35px;">(710)</div>
<div class="t num" style="left:674.04px;width:53.71px;top:519.35px;">(710)</div>
<div class="t num" style="left:729.3499999999999px;width:53.71px;top:519.35px;">(710)</div>
<div class="t num" style="left:784.6599999999999px;width:53.71px;top:519.35px;">(710)</div>
<div class="t num" style="left:840px;width:44.90px;top:519.35px;">(710)</div>
<div class="t num" style="left:886.5px;width:44.40px;top:519.35px;">(710)</div>
<div class="t num" style="left:932.5px;width:42.90px;top:519.35px;">(710)</div>
<div class="t lab" style="left:61.5px;top:532.35px;">OPEX</div>
<div class="t num" style="left:176.25px;width:53.71px;top:532.35px;">(198,325)</div>
<div class="t num" style="left:231.56px;width:53.71px;top:532.35px;">(198,325)</div>
<div class="t num" style="left:286.87px;width:53.71px;top:532.35px;">(198,325)</div>
<div class="t num" style="left:342.18px;width:53.71px;top:532.35px;">(156,075)</div>
<div class="t num" style="left:397.49px;width:53.71px;top:532.35px;">(156,075)</div>
<div class="t num" style="left:452.8px;width:53.71px;top:532.35px;">(135,575)</div>
<div class="t num" style="left:508.11px;width:53.71px;top:532.35px;">(135,575)</div>
<div class="t num" style="left:563.4200000000001px;width:53.71px;top:532.35px;">(135,575)</div>
<div class="t num" style="left:618.73px;width:53.71px;top:532.35px;">(135,575)</div>
<div class="t num" style="left:674.04px;width:53.71px;top:532.35px;">(135,575)</div>
<div class="t num" style="left:729.3499999999999px;width:53.71px;top:532.35px;">(135,575)</div>
<div class="t num" style="left:784.6599999999999px;width:53.71px;top:532.35px;">(135,575)</div>
<div class="t num" style="left:840px;width:44.90px;top:532.35px;">(199,919)</div>
<div class="t num" style="left:886.5px;width:44.40px;top:532.35px;">(199,919)</div>
<div class="t num" style="left:932.5px;width:42.90px;top:532.35px;">(199,919)</div>
<div class="t lab" style="left:61.5px;top:545.35px;">Placeholder 6</div>
<div class="t num" style="left:222.86px;top:545.40px;color:#95a3b6;font-size:9px;">-</div>
<div class="t num" style="left:278.17px;top:545.40px;color:#95a3b6;font-size:9px;">-</div>
<div class="t num" style="left:333.48px;top:545.40px;color:#95a3b6;font-size:9px;">-</div>
<div class="t num" style="left:388.79px;top:545.40px;color:#95a3b6;font-size:9px;">-</div>
<div class="t num" style="left:444.10px;top:545.40px;color:#95a3b6;font-size:9px;">-</div>
<div class="t num" style="left:499.41px;top:545.40px;color:#95a3b6;font-size:9px;">-</div>
<div class="t num" style="left:554.72px;top:545.40px;color:#95a3b6;font-size:9px;">-</div>
<div class="t num" style="left:610.03px;top:545.40px;color:#95a3b6;font-size:9px;">-</div>
<div class="t num" style="left:665.34px;top:545.40px;color:#95a3b6;font-size:9px;">-</div>
<div class="t num" style="left:720.65px;top:545.40px;color:#95a3b6;font-size:9px;">-</div>
<div class="t num" style="left:775.96px;top:545.40px;color:#95a3b6;font-size:9px;">-</div>
<div class="t num" style="left:831.27px;top:545.40px;color:#95a3b6;font-size:9px;">-</div>
<div class="t num" style="left:877.80px;top:545.40px;color:#95a3b6;font-size:9px;">-</div>
<div class="t num" style="left:923.80px;top:545.40px;color:#95a3b6;font-size:9px;">-</div>
<div class="t num" style="left:968.30px;top:545.40px;color:#95a3b6;font-size:9px;">-</div>
<div class="t sec" style="left:49px;top:328.60px;color:#fff;">Total Revenue</div>
<div class="t num" style="left:176.25px;width:53.71px;top:328.60px;color:#fff;">1,984,950</div>
<div class="t num" style="left:231.56px;width:53.71px;top:328.60px;color:#fff;">1,984,950</div>
<div class="t num" style="left:286.87px;width:53.71px;top:328.60px;color:#fff;">1,984,950</div>
<div class="t num" style="left:342.18px;width:53.71px;top:328.60px;color:#fff;">1,984,950</div>
<div class="t num" style="left:397.49px;width:53.71px;top:328.60px;color:#fff;">1,984,950</div>
<div class="t num" style="left:452.8px;width:53.71px;top:328.60px;color:#fff;">1,984,950</div>
<div class="t num" style="left:508.11px;width:53.71px;top:328.60px;color:#fff;">1,984,950</div>
<div class="t num" style="left:563.4200000000001px;width:53.71px;top:328.60px;color:#fff;">1,984,950</div>
<div class="t num" style="left:618.73px;width:53.71px;top:328.60px;color:#fff;">1,984,950</div>
<div class="t num" style="left:674.04px;width:53.71px;top:328.60px;color:#fff;">1,984,950</div>
<div class="t num" style="left:729.3499999999999px;width:53.71px;top:328.60px;color:#fff;">1,984,950</div>
<div class="t num" style="left:784.6599999999999px;width:53.71px;top:328.60px;color:#fff;">1,984,950</div>
<div class="t num" style="left:840px;width:44.90px;top:328.60px;color:#fff;">2,356,450</div>
<div class="t num" style="left:886.5px;width:44.40px;top:328.60px;color:#fff;">2,356,450</div>
<div class="t num" style="left:932.5px;width:42.90px;top:328.60px;color:#fff;">2,356,450</div>
<div class="t sec" style="left:49px;top:341.10px;color:#e6ecf7;">Misc COGS</div>
<div class="t num" style="left:176.25px;width:53.71px;top:341.10px;color:#e3eaf6;">(3,165)</div>
<div class="t num" style="left:231.56px;width:53.71px;top:341.10px;color:#e3eaf6;">(3,165)</div>
<div class="t num" style="left:286.87px;width:53.71px;top:341.10px;color:#e3eaf6;">(3,165)</div>
<div class="t num" style="left:342.18px;width:53.71px;top:341.10px;color:#e3eaf6;">(3,165)</div>
<div class="t num" style="left:397.49px;width:53.71px;top:341.10px;color:#e3eaf6;">(3,165)</div>
<div class="t num" style="left:452.8px;width:53.71px;top:341.10px;color:#e3eaf6;">(3,165)</div>
<div class="t num" style="left:508.11px;width:53.71px;top:341.10px;color:#e3eaf6;">(3,165)</div>
<div class="t num" style="left:563.4200000000001px;width:53.71px;top:341.10px;color:#e3eaf6;">(3,165)</div>
<div class="t num" style="left:618.73px;width:53.71px;top:341.10px;color:#e3eaf6;">(3,165)</div>
<div class="t num" style="left:674.04px;width:53.71px;top:341.10px;color:#e3eaf6;">(3,165)</div>
<div class="t num" style="left:729.3499999999999px;width:53.71px;top:341.10px;color:#e3eaf6;">(3,165)</div>
<div class="t num" style="left:784.6599999999999px;width:53.71px;top:341.10px;color:#e3eaf6;">(3,165)</div>
<div class="t num" style="left:840px;width:44.90px;top:341.10px;color:#e3eaf6;">(3,165)</div>
<div class="t num" style="left:886.5px;width:44.40px;top:341.10px;color:#e3eaf6;">(3,165)</div>
<div class="t num" style="left:932.5px;width:42.90px;top:341.10px;color:#e3eaf6;">(3,165)</div>
<div class="t sec" style="left:49px;top:441.35px;color:#111;">GROSS MARGIN</div>
<div class="t num" style="left:176.25px;width:53.71px;top:441.35px;color:#111;">1,981,785</div>
<div class="t num" style="left:231.56px;width:53.71px;top:441.35px;color:#111;">1,981,785</div>
<div class="t num" style="left:286.87px;width:53.71px;top:441.35px;color:#111;">1,981,785</div>
<div class="t num" style="left:342.18px;width:53.71px;top:441.35px;color:#111;">1,981,785</div>
<div class="t num" style="left:397.49px;width:53.71px;top:441.35px;color:#111;">1,981,785</div>
<div class="t num" style="left:452.8px;width:53.71px;top:441.35px;color:#111;">1,981,785</div>
<div class="t num" style="left:508.11px;width:53.71px;top:441.35px;color:#111;">1,981,785</div>
<div class="t num" style="left:563.4200000000001px;width:53.71px;top:441.35px;color:#111;">1,981,785</div>
<div class="t num" style="left:618.73px;width:53.71px;top:441.35px;color:#111;">1,981,785</div>
<div class="t num" style="left:674.04px;width:53.71px;top:441.35px;color:#111;">1,981,785</div>
<div class="t num" style="left:729.3499999999999px;width:53.71px;top:441.35px;color:#111;">1,981,785</div>
<div class="t num" style="left:784.6599999999999px;width:53.71px;top:441.35px;color:#111;">1,981,785</div>
<div class="t num" style="left:840px;width:44.90px;top:441.35px;color:#111;">2,353,285</div>
<div class="t num" style="left:886.5px;width:44.40px;top:441.35px;color:#111;">2,353,285</div>
<div class="t num" style="left:932.5px;width:42.90px;top:441.35px;color:#111;">2,353,285</div>
<div class="t sec" style="left:49px;top:467.35px;">Variable Expenses</div>
<svg class="a" style="left:977.3px;top:476.80px" width="4" height="4" viewBox="0 0 4 4"><path d="M0 0h4L0 4z" fill="#1e6b3f"/></svg>
<svg class="a" style="left:977.3px;top:489.80px" width="4" height="4" viewBox="0 0 4 4"><path d="M0 0h4L0 4z" fill="#1e6b3f"/></svg>
<svg class="a" style="left:977.3px;top:502.80px" width="4" height="4" viewBox="0 0 4 4"><path d="M0 0h4L0 4z" fill="#1e6b3f"/></svg>
<svg class="a" style="left:977.3px;top:515.80px" width="4" height="4" viewBox="0 0 4 4"><path d="M0 0h4L0 4z" fill="#1e6b3f"/></svg>
<svg class="a" style="left:977.3px;top:541.80px" width="4" height="4" viewBox="0 0 4 4"><path d="M0 0h4L0 4z" fill="#1e6b3f"/></svg>
<svg class="a" style="left:977.3px;top:554.80px" width="4" height="4" viewBox="0 0 4 4"><path d="M0 0h4L0 4z" fill="#1e6b3f"/></svg>
<div class="a" style="left:987.5px;top:51px;width:12.5px;height:508px;background:#f4f4f4"></div>
<div class="a" style="left:991.3px;top:63px;width:5.6px;height:99.5px;border-radius:2.8px;background:#696969"></div>
<svg class="a" style="left:990.6px;top:53.6px" width="7" height="5" viewBox="0 0 7 5"><path d="M3.5 .5L6.7 4.5H.3z" fill="#5f5f5f"/></svg>
<svg class="a" style="left:990.6px;top:552px" width="7" height="5" viewBox="0 0 7 5"><path d="M3.5 4.5L6.7 .5H.3z" fill="#5f5f5f"/></svg>
<div class="a" id="tabbar"></div>
<div class="t tab" style="letter-spacing:0.312px;left:79px;top:565.1px;">How To</div>
<div class="a tabbg" style="left:121px;width:59.5px;background:#fbfcc4"></div>
<div class="t tab" style="letter-spacing:0.061px;left:128px;top:565.1px;">Inputs 2025</div>
<div class="a" style="left:185px;top:559px;width:43px;height:17px;background:#fff;border-radius:0 0 2px 2px"></div>
<div class="a" style="left:192px;top:573.6px;width:30px;height:1.4px;background:#107c41"></div>
<div class="t tab" style="letter-spacing:-0.102px;left:192px;top:565.1px;font-weight:bold;color:#111;">IS 2025</div>
<div class="a tabbg" style="left:232px;width:45px;background:#fbfcbc"></div>
<div class="t tab" style="letter-spacing:-0.424px;left:238.5px;top:565.1px;">CF 2025</div>
<div class="a tabbg" style="left:281.5px;width:45.5px;background:#e7e9ef"></div>
<div class="t tab" style="letter-spacing:-0.344px;left:287.5px;top:565.1px;">BS 2025</div>
<div class="a tabbg" style="left:331px;width:121px;background:#e7e9ef"></div>
<div class="t tab" style="letter-spacing:-0.002px;left:338px;top:565.1px;">Statements Summary 2025</div>
<div class="a tabbg" style="left:457px;width:62.5px;background:#fafa8c"></div>
<div class="t tab" style="letter-spacing:-0.422px;left:464px;top:565.1px;">CAPEX 2025</div>
<div class="a tabbg" style="left:524px;width:57px;background:#fbfcc4"></div>
<div class="t tab" style="letter-spacing:-0.359px;left:530.5px;top:565.1px;">OPEX 2025</div>
<div class="a tabbg" style="left:586.5px;width:59.5px;background:#fbfcc8"></div>
<div class="t tab" style="letter-spacing:0.061px;left:592.5px;top:565.1px;">Inputs 2026</div>
<div class="a tabbg" style="left:651.5px;width:41.5px;background:#fbfcc0"></div>
<div class="t tab" style="letter-spacing:-0.268px;left:657.5px;top:565.1px;">IS 2026</div>
<div class="a tabbg" style="left:697px;width:44px;background:#fbfcbc"></div>
<div class="t tab" style="letter-spacing:-0.341px;left:703px;top:565.1px;">CF 2026</div>
<div class="a tabbg" style="left:746px;width:44px;background:#e7e9ef"></div>
<div class="t tab" style="letter-spacing:-0.344px;left:752.5px;top:565.1px;">BS 2026</div>
<div class="a" style="left:802.5px;top:560px;width:78px;height:16px;overflow:hidden"><div class="t tab" style="letter-spacing:-0.002px;left:0;top:5.1px;">Statements Summary 2026</div></div>
<svg class="a" style="left:16.5px;top:564.5px;opacity:.35" width="5" height="8" viewBox="0 0 5 8"><path d="M4 .8L1 4l3 3.2" fill="none" stroke="#555" stroke-width="1.1"/></svg>
<svg class="a" style="left:36.5px;top:564.5px" width="6" height="8" viewBox="0 0 6 8"><path d="M1.5 .8L4.5 4l-3 3.2" fill="none" stroke="#6a6a6a" stroke-width="1.1"/></svg>
<div class="t" style="left:886.5px;top:561.5px;font-size:9px;font-weight:bold;color:#333;letter-spacing:-.3px">...</div>
<svg class="a" style="left:906.5px;top:564px" width="9" height="9" viewBox="0 0 9 9"><path d="M4.5 .5v8M.5 4.5h8" stroke="#333" stroke-width="1"/></svg>
<svg class="a" style="left:930.5px;top:564.5px" width="3" height="9" viewBox="0 0 3 9"><circle cx="1.5" cy="1.2" r=".9" fill="#444"/><circle cx="1.5" cy="4.5" r=".9" fill="#444"/><circle cx="1.5" cy="7.8" r=".9" fill="#444"/></svg>
<svg class="a" style="left:946px;top:565.5px" width="5" height="6" viewBox="0 0 5 6"><path d="M4.5 .3v5.4L.5 3z" fill="#555"/></svg>
<div class="a" style="left:953.5px;top:565.5px;width:12.5px;height:6px;border-radius:3px;background:#5f5f5f"></div>
<svg class="a" style="left:981px;top:565.5px" width="5" height="6" viewBox="0 0 5 6"><path d="M.5 .3v5.4L4.5 3z" fill="#555"/></svg>
<div class="a" id="status"></div>
<div class="t st" style="letter-spacing:-0.523px;left:7px;top:583.5px;">Ready</div>
<svg class="a" style="left:39.5px;top:581px" width="10" height="10" viewBox="0 0 10 10"><rect x=".6" y="1" width="8.8" height="8" fill="none" stroke="#444" stroke-width="1"/><path d="M.6 3.4h8.8M3.6 3.4V9" stroke="#444" stroke-width=".8"/><circle cx="6.6" cy="6.6" r="1.5" fill="none" stroke="#444" stroke-width=".9"/></svg>
<svg class="a" style="left:59.5px;top:580.5px" width="10" height="10" viewBox="0 0 10 10"><circle cx="4.2" cy="1.6" r="1.1" fill="none" stroke="#444" stroke-width=".8"/><path d="M.8 3.6h6.8M4.2 3.6v2.6M2.2 9.4l2-3.2 1.4 2.2" fill="none" stroke="#444" stroke-width=".9"/><path d="M6.3 6.4l2.8 2.8M9.1 6.4L6.3 9.2" stroke="#444" stroke-width=".8"/></svg>
<div class="t st" style="letter-spacing:-0.328px;left:72px;top:583.4px;font-weight:bold;color:#333;">Accessibility: Investigate</div>
<div class="t st" style="letter-spacing:-0.182px;left:648.5px;top:583.5px;">Average: (5,500)</div>
<div class="t st" style="letter-spacing:-0.332px;left:710.5px;top:583.5px;">Count: 12</div>
<div class="t st" style="letter-spacing:-0.229px;left:750px;top:583.5px;">Sum: (66,000)</div>
<div class="a" style="left:807.5px;top:577.5px;width:23px;height:14.5px;background:#e1e1e1"></div>
<svg class="a" style="left:814.5px;top:581.2px" width="9" height="9" viewBox="0 0 9 9"><rect x=".5" y=".5" width="8" height="8" fill="none" stroke="#444" stroke-width=".9"/><path d="M3.2 .5v8M5.8 .5v8M.5 3.2h8M.5 5.8h8" stroke="#444" stroke-width=".8"/></svg>
<svg class="a" style="left:840px;top:581.2px" width="10" height="9" viewBox="0 0 10 9"><rect x=".5" y=".5" width="9" height="8" fill="none" stroke="#444" stroke-width=".9"/><path d="M2.8 .5v8M7.2 .5v8M2.8 2.5h4.4M2.8 4.5h4.4M2.8 6.5h4.4" stroke="#444" stroke-width=".8"/></svg>
<svg class="a" style="left:866.5px;top:581.2px" width="10" height="9" viewBox="0 0 10 9"><rect x=".5" y=".5" width="9" height="8" fill="none" stroke="#444" stroke-width=".9"/><path d="M3.3 2.5v3h3.5v-5" fill="none" stroke="#444" stroke-width=".9"/></svg>
<div class="a" style="left:888px;top:585.2px;width:5px;height:.9px;background:#555"></div>
<div class="a" style="left:896px;top:585.2px;width:66px;height:.9px;background:#9a9a9a"></div>
<div class="a" style="left:927.3px;top:582px;width:3.2px;height:8px;background:#4a4a4a;border-radius:.6px"></div>
<svg class="a" style="left:964.5px;top:583px" width="6" height="6" viewBox="0 0 6 6"><path d="M3 .5v5M.5 3h5" stroke="#555" stroke-width=".9"/></svg>
<div class="t st" style="letter-spacing:-0.891px;left:978px;top:583.5px;">100%</div>
</div></body></html>
